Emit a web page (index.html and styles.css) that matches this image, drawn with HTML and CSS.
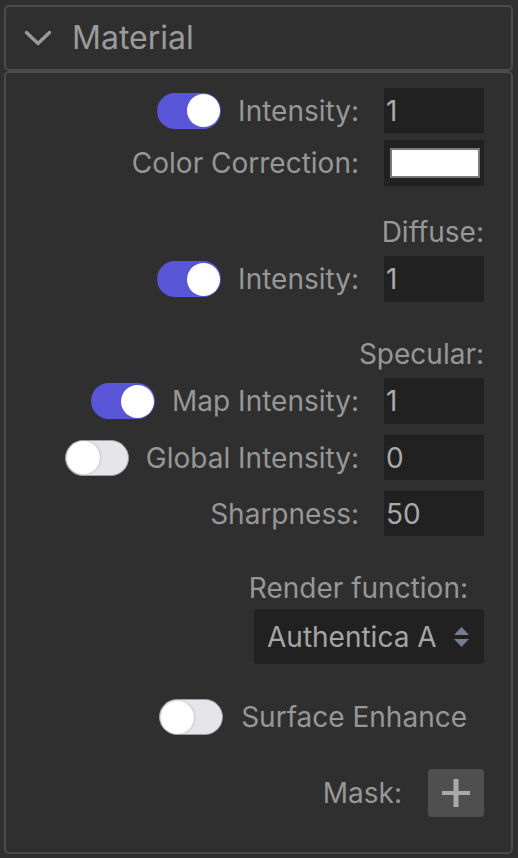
FILE: index.html
```html
<!DOCTYPE html>
<html>
<head>
<meta charset="utf-8">
<link rel="stylesheet" href="styles.css">
</head>
<body>
<div class="panel">
  <div class="panel-header">
    <svg class="chevron" width="28" height="16" viewBox="0 0 28 16"><path d="M2.5 2.5 L14 13.5 L25.5 2.5" fill="none" stroke="#999999" stroke-width="3.4" stroke-linecap="round" stroke-linejoin="round"/></svg>
    <span class="panel-title">Material</span>
  </div>
  <div class="panel-body">
    <div class="row row-first">
      <span class="toggle on"><span class="knob"></span></span>
      <span class="label">Intensity:</span>
      <span class="field">1</span>
    </div>
    <div class="row row-tight">
      <span class="label">Color Correction:</span>
      <span class="field color-field"><span class="swatch"></span></span>
    </div>

    <div class="heading heading-first">Diffuse:</div>
    <div class="row row-tight">
      <span class="toggle on"><span class="knob"></span></span>
      <span class="label">Intensity:</span>
      <span class="field">1</span>
    </div>

    <div class="heading">Specular:</div>
    <div class="row row-tight">
      <span class="toggle on"><span class="knob"></span></span>
      <span class="label">Map Intensity:</span>
      <span class="field">1</span>
    </div>
    <div class="row row-loose">
      <span class="toggle off"><span class="knob"></span></span>
      <span class="label">Global Intensity:</span>
      <span class="field">0</span>
    </div>
    <div class="row row-loose">
      <span class="label">Sharpness:</span>
      <span class="field">50</span>
    </div>

    <div class="heading heading-inset">Render function:</div>
    <div class="select-row">
      <div class="select">
        <span class="select-value">Authentica A</span>
        <svg class="select-arrows" width="15" height="20" viewBox="0 0 15 20"><path d="M7.5 0 L15 8 L0 8 Z" fill="#747c94"/><path d="M0 12 L15 12 L7.5 20 Z" fill="#747c94"/></svg>
      </div>
    </div>

    <div class="row surface-row">
      <span class="toggle off"><span class="knob"></span></span>
      <span class="label">Surface Enhance</span>
    </div>

    <div class="row mask-row">
      <span class="label">Mask:</span>
      <span class="add-btn">
        <svg width="28" height="28" viewBox="0 0 28 28"><rect x="0" y="12" width="28" height="4" fill="#a9a9a9"/><rect x="11.5" y="0" width="5" height="28" fill="#a9a9a9"/></svg>
      </span>
    </div>
  </div>
</div>
</body>
</html>
```

FILE: styles.css
```css
* {
  box-sizing: border-box;
}

html, body {
  margin: 0;
  padding: 0;
  background: #2f2f2f;
}

body {
  font-family: Inter, "Noto Sans", sans-serif;
  font-size: 28px;
  color: #979797;
}

.panel {
  padding: 5px 5px 5px 4px;
}

.panel-header {
  height: 66px;
  border: 2px solid #4b4b4b;
  border-radius: 5px;
  display: flex;
  align-items: center;
  padding-left: 18px;
  gap: 20px;
}

.chevron {
  display: block;
  flex: none;
}

.panel-title {
  font-size: 32px;
  color: #9b9b9b;
  line-height: 1;
}

.panel-body {
  border: 2px solid #4b4b4b;
  border-radius: 5px;
  padding: 15px 27px 35px 0;
}

.row {
  display: flex;
  justify-content: flex-end;
  align-items: center;
  gap: 17px;
}

.row-first {
  height: 45px;
}

.row-tight {
  margin-top: 7px;
  height: 46px;
}

.row-loose {
  margin-top: 11px;
  height: 45px;
}

.label {
  white-space: nowrap;
  line-height: 34px;
}

.field {
  width: 100px;
  height: 100%;
  margin-left: 8px;
  background: #212121;
  color: #a9a9a9;
  display: flex;
  align-items: center;
  padding-left: 2px;
}

.color-field {
  padding-left: 6px;
}

.swatch {
  width: 90px;
  height: 30px;
  background: #ffffff;
  border: 2px solid #7a7a7a;
}

.toggle {
  width: 64px;
  height: 36px;
  border-radius: 18px;
  display: flex;
  align-items: center;
  padding: 0 1px;
  flex: none;
}

.toggle.on {
  background: #5856d6;
  justify-content: flex-end;
}

.toggle.off {
  background: #e5e5ea;
  border: 1.5px solid #9d9da3;
  justify-content: flex-start;
}

.knob {
  width: 33px;
  height: 33px;
  border-radius: 50%;
  background: #ffffff;
}

.toggle.off .knob {
  box-shadow: 1px 0 2px rgba(0, 0, 0, 0.15);
}

.heading {
  margin-top: 35px;
  text-align: right;
  line-height: 34px;
}

.heading-first {
  margin-top: 29px;
}

.heading + .row-tight {
  margin-top: 7px;
}

.heading-inset {
  padding-right: 16px;
}

.select-row {
  display: flex;
  justify-content: flex-end;
  margin-top: 4px;
}

.select {
  width: 230px;
  height: 55px;
  background: #212121;
  border-radius: 4px;
  display: flex;
  align-items: center;
  justify-content: space-between;
  padding: 0 15px 0 13px;
}

.select-value {
  color: #a5a5a5;
}

.select-arrows {
  display: block;
}

.surface-row {
  margin-top: 35px;
  height: 36px;
  gap: 18px;
  padding-right: 17px;
}

.mask-row {
  margin-top: 34px;
  height: 48px;
  gap: 26px;
}

.add-btn {
  width: 56px;
  height: 48px;
  background: #4f4f4f;
  border-radius: 4px;
  display: flex;
  align-items: center;
  justify-content: center;
}

.add-btn svg {
  display: block;
}
```
